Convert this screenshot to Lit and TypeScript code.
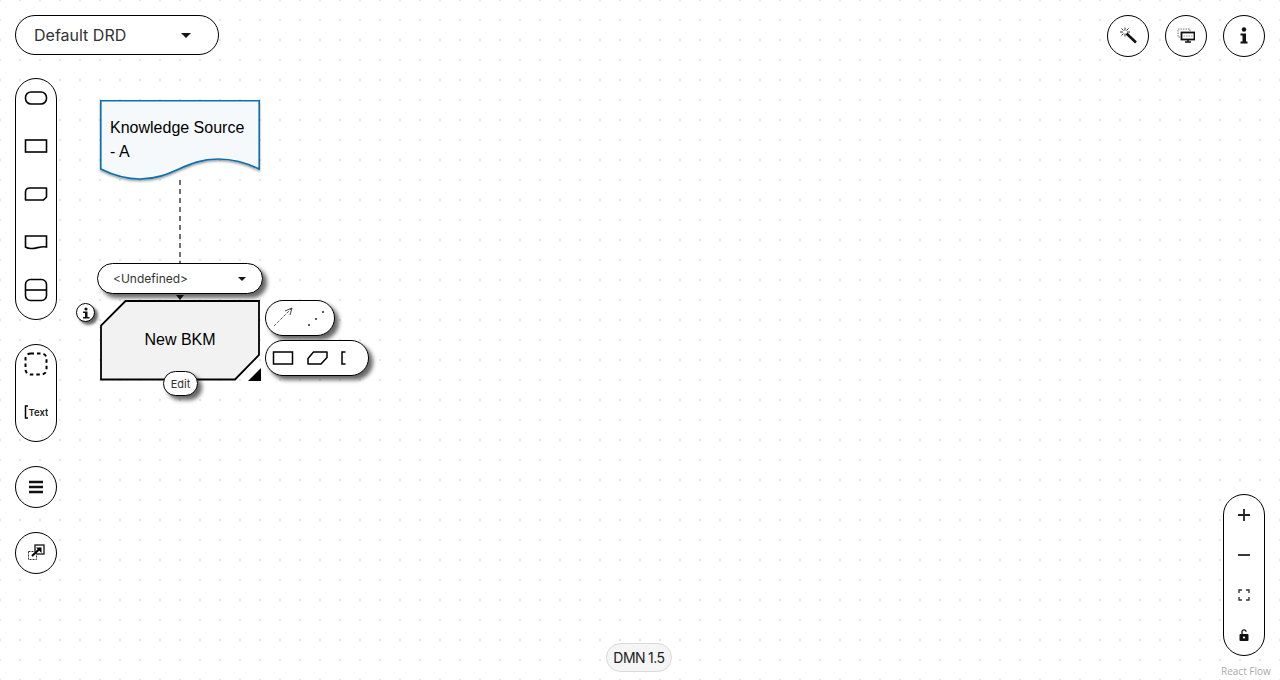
import { LitElement, html, css, svg } from "lit";
import { customElement } from "lit/decorators.js";

@customElement("app-root")
export class AppRoot extends LitElement {
  static styles = css`
    :host {
      display: block;
      position: relative;
      width: 1280px;
      height: 680px;
      overflow: hidden;
      background-color: #fff;
      background-image: radial-gradient(circle at center, #e6e6e6 0.9px, transparent 1.2px);
      background-size: 20px 20px;
      background-position: -10px -10px;
      font-family: "Inter", "Noto Sans", sans-serif;
      color: #151515;
    }
    .panel { position: absolute; background: #fff; border: 1px solid #000; box-sizing: border-box; }
    .drd {
      left: 15px; top: 15px; width: 204px; height: 40px; border-radius: 20px;
      display: flex; align-items: center; justify-content: space-between;
      padding: 0 27px 0 18px; font-size: 16px; color: #333;
    }
    .caret { width: 0; height: 0; border-left: 5px solid transparent; border-right: 5px solid transparent; border-top: 5px solid #151515; }
    .col { width: 42px; border-radius: 21px; display: flex; flex-direction: column; align-items: center; }
    .palette1 { left: 15px; top: 78px; height: 242px; }
    .palette2 { left: 15px; top: 344px; height: 98px; }
    .palette1 .slot, .palette2 .slot { height: 48px; flex: none; width: 100%; display: flex; align-items: center; justify-content: center; }
    .palette1 .slot:first-child, .palette2 .slot:first-child { margin-top: -5px; }
    .circle { width: 42px; height: 42px; border-radius: 50%; display: flex; align-items: center; justify-content: center; }
    .c-list { left: 15px; top: 466px; }
    .c-ext { left: 15px; top: 532px; }
    .c-wand { left: 1107px; top: 15px; }
    .c-screen { left: 1165px; top: 15px; }
    .c-info { left: 1223px; top: 15px; }
    .zoom { left: 1223px; top: 494px; height: 162px; }
    .zoom .slot { height: 40px; flex: none; width: 100%; display: flex; align-items: center; justify-content: center; }
    .version {
      left: 606px; top: 643px; height: 29px; width: 66px; border: 1px solid #d9d9d9; border-radius: 15px;
      background: #f5f5f5; display: flex; align-items: center; justify-content: center;
      font-size: 14px; letter-spacing: -0.5px; word-spacing: -0.5px; color: #222;
    }
    .attribution { position: absolute; left: 1221px; top: 665px; font-size: 10px; color: #aaa; line-height: 12px; font-family: "Open Sans", sans-serif; }
    .edge { position: absolute; left: 178px; top: 180px; overflow: visible; }
    .node { position: absolute; overflow: visible; }
    .node-label { position: absolute; font-family: "Liberation Sans", Arial, sans-serif; font-size: 16px; line-height: 24px; color: #000; }
    .ks-label { left: 110px; top: 116px; width: 140px; }
    .bkm-label { left: 100px; top: 328px; width: 160px; text-align: center; }
    .shadowed { box-shadow: 4px 4px 4px rgba(0,0,0,0.6); }
    .type {
      left: 97px; top: 263px; width: 166px; height: 31px; border-radius: 16px;
      display: flex; align-items: center; justify-content: space-between;
      padding: 0 16px 0 15px; font-size: 12px; color: #333;
    }
    .type .caret { border-left-width: 4.5px; border-right-width: 4.5px; border-top-width: 4.5px; }
    .tick { position: absolute; left: 176px; top: 295px; width: 0; height: 0; border-left: 4px solid transparent; border-right: 4px solid transparent; border-top: 5px solid #222; }
    .info { left: 76px; top: 303px; width: 19px; height: 19px; border-radius: 50%; display: flex; align-items: center; justify-content: center; box-shadow: 3px 3px 3px rgba(0,0,0,.6); }
    .edit { left: 163px; top: 371px; width: 35px; height: 25px; border-radius: 13px; font-size: 11px; display: flex; align-items: center; justify-content: center; color: #333; }
    .tools1 { left: 265px; top: 300px; width: 70px; height: 36px; border-radius: 18px; }
    .tools2 { left: 265px; top: 340px; width: 104px; height: 36px; border-radius: 18px; }
    .tools1 svg, .tools2 svg { position: absolute; left: 0; top: 0; overflow: visible; }
    .resize { position: absolute; left: 248px; top: 368px; }
    svg { display: block; }
  `;

  private ico(w: number, h: number, body: unknown) {
    return html`<svg width=${w} height=${h} viewBox="0 0 ${w} ${h}">${body}</svg>`;
  }

  render() {
    const s = "fill:none;stroke:#000;stroke-width:1.6";
    return html`
      <div class="panel drd"><span>Default DRD</span><span class="caret"></span></div>

      <div class="panel col palette1">
        <div class="slot">${this.ico(24, 16, svg`<rect x="1.5" y="2" width="21" height="12" rx="5.5" style=${s}/>`)}</div>
        <div class="slot">${this.ico(24, 16, svg`<rect x="1.5" y="2" width="21" height="12" style=${s}/>`)}</div>
        <div class="slot">${this.ico(24, 16, svg`<path d="M1.5 14V6Q1.5 2 6 2H22.500V11L19.500 14Z" style=${s + ";stroke-linejoin:round"}/>`)}</div>
        <div class="slot">${this.ico(24, 16, svg`<path d="M1.5 2H22.5V13C17 11.500 12 15 7 14.500C5 14.400 3 14 1.5 13Z" style=${s}/>`)}</div>
        <div class="slot">${this.ico(24, 24, svg`<rect x="1.5" y="1.5" width="21" height="21" rx="5" style=${s}/><path d="M1.5 12H22.5" style=${s}/>`)}</div>
      </div>

      <div class="panel col palette2">
        <div class="slot">${this.ico(24, 24, svg`<rect x="1.5" y="1.5" width="21" height="21" rx="5" style="fill:none;stroke:#000;stroke-width:2;stroke-dasharray:3.5 3"/>`)}</div>
        <div class="slot">${this.ico(24, 16, svg`<path d="M4 2H1.5V14H4" style="fill:none;stroke:#000;stroke-width:1.5"/><text x="4.500" y="11.500" font-family="Inter, sans-serif" font-size="9.5" font-weight="600" fill="#222">Text</text>`)}</div>
      </div>

      <div class="panel circle c-list">${this.ico(16, 14, svg`<path d="M1 2H15M1 7H15M1 12H15" style="stroke:#111;stroke-width:2.4"/>`)}</div>
      <div class="panel circle c-ext">${this.ico(18, 18, svg`<rect x="8" y="1" width="9" height="9" style="fill:#fff;stroke:#111;stroke-width:1.3"/><rect x="1.500" y="7.500" width="8" height="8" style="fill:#fff;stroke:#333;stroke-width:1;stroke-dasharray:2 1"/><path d="M5 12L13 4.500" style="stroke:#000;stroke-width:2"/><path d="M9 3.500H14.500V9Z" fill="#000"/>`)}</div>

      <div class="panel circle c-wand">${this.ico(18, 18, svg`<path d="M7.500 6.500L17 15.500" style="stroke:#111;stroke-width:2.6"/><path d="M6 0.500V3.500M6 6.500V9.500M1 5H4M8 5H11M2.500 1.500L4.500 3.500M9.500 1.500L7.500 3.500M2.500 8.500L4.500 6.500" style="stroke:#333;stroke-width:1"/>`)}</div>
      <div class="panel circle c-screen">${this.ico(18, 16, svg`<rect x="1" y="1" width="12" height="8" style="fill:none;stroke:#777;stroke-width:1;stroke-dasharray:1.5 1"/><rect x="4.500" y="4.500" width="13" height="7" style="fill:#fff;stroke:#111;stroke-width:1.8"/><path d="M6.500 8H15.500" style="stroke:#999;stroke-width:1;stroke-dasharray:1.5 1"/><path d="M8 14H14" style="stroke:#111;stroke-width:1.5"/><path d="M11 12V14" style="stroke:#111;stroke-width:1.5"/>`)}</div>
      <div class="panel circle c-info">${this.ico(10, 18, svg`<circle cx="5" cy="2.500" r="2.200" fill="#111"/><path d="M1.500 6.500H7V14.500H8.500V16.500H1.500V14.500H3.500V8.500H1.500Z" fill="#111"/>`)}</div>

      <div class="panel col zoom">
        <div class="slot">${this.ico(14, 14, svg`<path d="M7 1V13M1 7H13" style="stroke:#222;stroke-width:1.8"/>`)}</div>
        <div class="slot">${this.ico(14, 14, svg`<path d="M1 7H13" style="stroke:#222;stroke-width:1.8"/>`)}</div>
        <div class="slot">${this.ico(14, 14, svg`<path d="M2 5V2H5M9 2H12V5M12 9V12H9M5 12H2V9" style="fill:none;stroke:#333;stroke-width:1.4"/>`)}</div>
        <div class="slot">${this.ico(14, 14, svg`<rect x="2.500" y="6" width="9" height="7" rx="1" fill="#111"/><path d="M5 6V3.800A2 2 0 0 1 9 3.800" style="fill:none;stroke:#111;stroke-width:1.3"/><circle cx="7" cy="9.500" r="1.100" fill="#fff"/>`)}</div>
      </div>

      <div class="panel version">DMN 1.5</div>
      <div class="attribution">React Flow</div>

      <svg class="edge" width="4" height="84"><path d="M2 0V84" style="stroke:#707070;stroke-width:2;stroke-dasharray:5 4"/></svg>

      <svg class="node" style="left:95px;top:95px" width="170" height="95" viewBox="0 0 170 95">
        <defs><filter id="sh" x="-10%" y="-10%" width="120%" height="130%"><feDropShadow dx="0" dy="1.500" stdDeviation="1" flood-color="#000" flood-opacity=".4"/></filter></defs>
        <path d="M5.800 5.800H164.200V74C152 68 140 64 123 64C90 64 78 84 45 84C34 84 22 82 5.800 74Z" fill="#f5f9fc" stroke="#0a6fae" stroke-width="1.600" filter="url(#sh)"/>
      </svg>
      <div class="node-label ks-label">Knowledge Source - A</div>

      <svg class="node" style="left:95px;top:295px" width="175" height="95" viewBox="0 0 175 95">
        <path d="M30.500 6H164V60L140 84.500H6V30.500Z" fill="#f2f2f2" stroke="#000" stroke-width="1.800"/>
      </svg>
      <div class="node-label bkm-label">New BKM</div>
      <svg class="resize" width="13" height="13"><path d="M13 0V13H0Z" fill="#000"/></svg>

      <div class="tick"></div>
      <div class="panel type shadowed"><span>&lt;Undefined&gt;</span><span class="caret"></span></div>
      <div class="panel info">${this.ico(8, 12, svg`<circle cx="4" cy="2" r="1.600" fill="#111"/><path d="M1 4.500H5.500V10H7.500V11.500H1V10H3V6H1Z" fill="#111"/>`)}</div>
      <div class="panel edit shadowed">Edit</div>

      <div class="panel tools1 shadowed">
        <svg width="70" height="36">
          <path d="M8 25L26 7" style="stroke:#333;stroke-width:.8;stroke-dasharray:3 1.500"/>
          <path d="M19 10L26 7L24 14" style="fill:none;stroke:#333;stroke-width:.9"/>
          <circle cx="43" cy="24" r="1" fill="#222"/><circle cx="50" cy="18" r="1" fill="#222"/><circle cx="57" cy="11" r="1" fill="#222"/>
        </svg>
      </div>
      <div class="panel tools2 shadowed">
        <svg width="104" height="36">
          <rect x="7.500" y="11" width="19" height="12" style="fill:none;stroke:#000;stroke-width:1.500"/>
          <path d="M42 23V17.500L47.500 11H61V16.500L55 23Z" style="fill:none;stroke:#000;stroke-width:1.500;stroke-linejoin:round"/>
          <path d="M79.500 11H76V23H79.500" style="fill:none;stroke:#000;stroke-width:1.500"/>
        </svg>
      </div>
    `;
  }
}
